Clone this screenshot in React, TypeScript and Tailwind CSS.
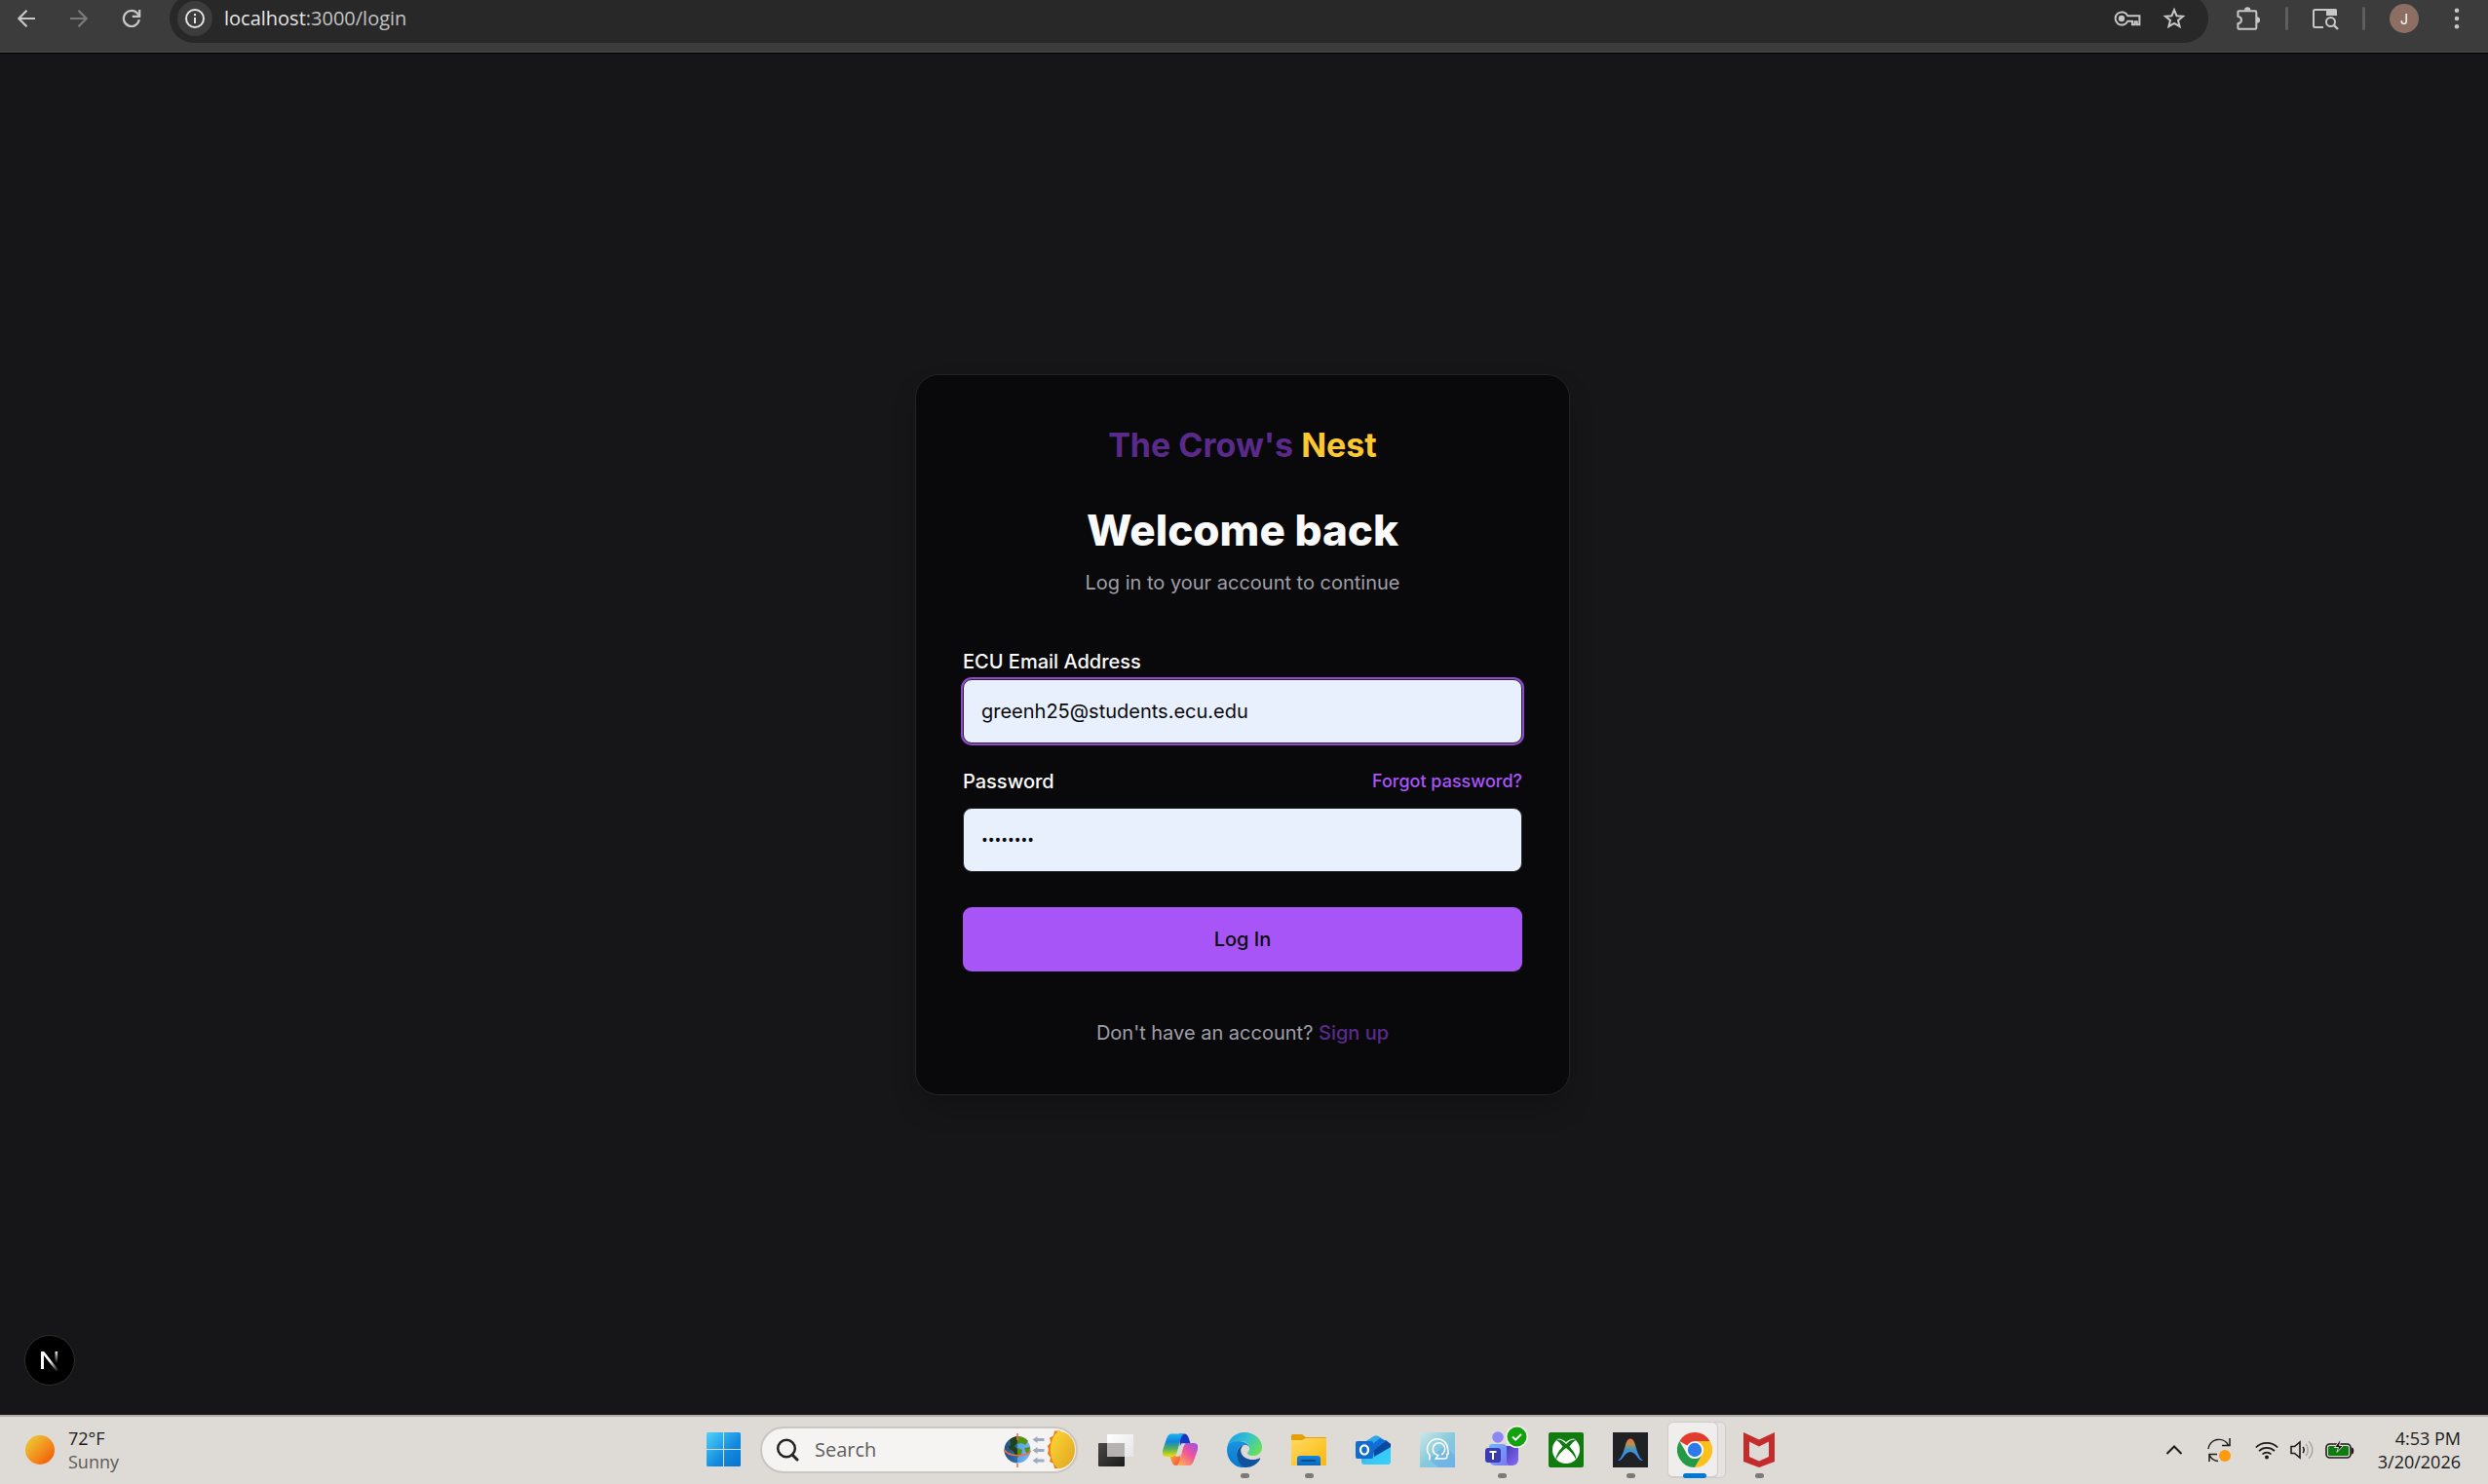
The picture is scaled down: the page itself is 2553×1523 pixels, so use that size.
import type { ReactNode } from 'react';

const iconButton = 'flex h-9 w-9 shrink-0 items-center justify-center text-[#c7c7c7]';

function BrowserBar() {
  return (
    <header className="h-[55px] shrink-0 overflow-hidden border-b border-black bg-[#3c3c3c] font-['Open_Sans',sans-serif]">
      <div className="-mt-1.5 flex h-[50px] items-center">
        <nav className="flex w-[174px] shrink-0 gap-[18px] pl-[9px]" aria-label="History">
          <button className={iconButton} aria-label="Back">
            <svg width="18" height="18" viewBox="0 0 18 18" fill="none" stroke="currentColor" strokeWidth="2.2">
              <path d="M18 9H1.5M9.5 .8 1.4 9l8.1 8.2" />
            </svg>
          </button>
          <button className="flex h-9 w-9 shrink-0 items-center justify-center text-[#7b7b7b]" aria-label="Forward">
            <svg width="18" height="18" viewBox="0 0 18 18" fill="none" stroke="currentColor" strokeWidth="2.2">
              <path d="M0 9h16.5M8.5 .8 16.6 9l-8.1 8.2" />
            </svg>
          </button>
          <button className={iconButton} aria-label="Reload">
            <svg width="20" height="20" viewBox="0 0 20 20" fill="none" stroke="currentColor" strokeWidth="2.2">
              <path d="M17.8 11.2A8 8 0 1 1 16 4.8L18 7" />
              <path d="M18.2 1v6.8h-7.4" />
            </svg>
          </button>
        </nav>
        <div className="flex h-[50px] min-w-0 flex-1 items-center rounded-full bg-[#282828] pl-2 pr-[17px]">
          <button className="flex h-9 w-9 shrink-0 items-center justify-center rounded-full bg-[#3c3c3c] text-[#e3e3e3]" aria-label="Site information">
            <svg width="20" height="20" viewBox="0 0 20 20" fill="none" stroke="currentColor" strokeWidth="2">
              <circle cx="10" cy="10" r="9" />
              <path d="M10 9v6M10 5v2.2" />
            </svg>
          </button>
          <div className="ml-3 flex-1 text-[20px] leading-[30px] text-[#c3c3c3]">
            <span className="text-[#e6e6e6]">localhost</span>:3000/login
          </div>
          <div className="flex gap-3">
            <button className={iconButton} aria-label="Passwords">
              <svg width="28" height="18" viewBox="0 0 28 18" fill="none" stroke="currentColor" strokeWidth="2">
                <path d="M14.2 6.2A6.6 6.6 0 1 0 14.2 11.8H19v3.4h2.6v-3h2.2v3h2.6V6.2z" />
                <circle cx="8" cy="9" r="3.2" fill="currentColor" stroke="none" />
              </svg>
            </button>
            <button className={iconButton} aria-label="Bookmark this tab">
              <svg width="24" height="24" viewBox="0 0 24 24" fill="none" stroke="currentColor" strokeWidth="2">
                <path d="m12 3.2 2.5 6 6.5.5-5 4.2 1.6 6.3L12 16.8l-5.600 3.400L8 13.900 3 9.700l6.500-.5z" />
              </svg>
            </button>
          </div>
        </div>
        <div className="flex shrink-0 items-center pl-[23px] pr-3.5">
          <button className={iconButton} aria-label="Extensions">
            <svg width="26" height="26" viewBox="0 0 26 26" fill="none" stroke="currentColor" strokeWidth="2">
              <path d="M4.500 5.200h15.500a1.300 1.300 0 0 1 1.300 1.300v16a1.300 1.300 0 0 1-1.300 1.300H3.700a1.300 1.300 0 0 1-1.300-1.300v-4.200c4.800-1 4.800-6.600 0-7.600V6.500a1.300 1.300 0 0 1 1.300-1.300z" />
              <path d="M9 4.500a3.200 3.200 0 0 1 6.400 0zM21.800 11.200a3.200 3.200 0 0 1 0 6.400z" fill="currentColor" stroke="none" />
            </svg>
          </button>
          <span className="mx-5 h-6 w-[3px] rounded-full bg-[#5e5e5e]" />
          <button className={iconButton} aria-label="Search tabs">
            <svg width="28" height="24" viewBox="0 0 28 24" fill="none" stroke="currentColor" strokeWidth="2">
              <path d="M12 21H3.500A1.500 1.500 0 0 1 2 19.500V4.500A1.500 1.500 0 0 1 3.500 3H24.500" />
              <path d="M15 2h9.500A1.500 1.500 0 0 1 26 3.500V9H15z" fill="currentColor" stroke="none" />
              <circle cx="19.500" cy="15.500" r="4.500" />
              <path d="m22.800 18.800 4.200 4.200" strokeWidth="2.400" />
            </svg>
          </button>
          <span className="ml-5 h-6 w-[3px] rounded-full bg-[#5e5e5e]" />
          <button className="ml-[25px] flex h-[30px] w-[30px] items-center justify-center rounded-full bg-[#8d6e63] font-[Inter] text-[14px] text-white">J</button>
          <button className="ml-[21px] flex h-9 w-9 items-center justify-center text-[#c7c7c7]" aria-label="Menu">
            <svg width="6" height="22" viewBox="0 0 6 22" fill="currentColor">
              <circle cx="3" cy="2.800" r="2.300" />
              <circle cx="3" cy="11" r="2.300" />
              <circle cx="3" cy="19.200" r="2.300" />
            </svg>
          </button>
        </div>
      </div>
      <div className="mt-[9px] h-px bg-[#4a4a4a]" />
    </header>
  );
}

const field =
  'block h-[66px] w-full rounded-[9px] border border-[#27272a] bg-[#e8f0fe] px-[18px] text-[#09090b] outline-none';

function LoginCard() {
  return (
    <section className="w-full max-w-[672px] rounded-3xl border border-[#242427] bg-[#09090b] p-12 font-[Inter,sans-serif] text-[20px] leading-[30px] text-[#fafafa] shadow-[0_15px_30px_-6px_rgba(0,0,0,0.25)]">
      <p className="text-center text-[34px] leading-[48px] font-bold text-[#592a8a]">
        The Crow's <span className="text-[#fdc82f]">Nest</span>
      </p>
      <h1 className="mt-9 text-center text-[44px] leading-[54px] font-extrabold">Welcome back</h1>
      <p className="mt-3 text-center text-[#9f9fa9]">Log in to your account to continue</p>
      <form className="mt-14" onSubmit={(e) => e.preventDefault()}>
        <label htmlFor="email" className="mb-[7px] block leading-[21px] font-medium">
          ECU Email Address
        </label>
        <input id="email" type="email" defaultValue="greenh25@students.ecu.edu" className={`${field} ring-2 ring-[#8e48d2]`} />
        <div className="mt-6 mb-3 flex items-center justify-between">
          <label htmlFor="password" className="font-medium">
            Password
          </label>
          <a href="#forgot" className="text-[18px] font-medium text-[#a855f7]">
            Forgot password?
          </a>
        </div>
        <input id="password" type="password" defaultValue="crowsnst" className={`${field} font-['Open_Sans'] text-[18px]`} />
        <button className="mt-9 h-[66px] w-full rounded-[9px] bg-[#a855f7] font-medium text-[#09090b]">Log In</button>
      </form>
      <p className="mt-12 text-center text-[#9f9fa9]">
        Don't have an account?{' '}
        <a href="#signup" className="font-medium text-[#592a8a]">
          Sign up
        </a>
      </p>
    </section>
  );
}

function NextBadge() {
  return (
    <button className="absolute bottom-[30px] left-[25px] flex h-[52px] w-[52px] items-center justify-center rounded-full border border-[#2e2e2e] bg-black" aria-label="Open dev tools">
      <svg width="20" height="24" viewBox="0 0 20 24" fill="none">
        <defs>
          <linearGradient id="nDiag" x1="11" y1="12" x2="19" y2="23" gradientUnits="userSpaceOnUse">
            <stop stopColor="#fff" />
            <stop offset="1" stopColor="#fff" stopOpacity="0" />
          </linearGradient>
          <linearGradient id="nStem" x1="0" y1="2" x2="0" y2="15" gradientUnits="userSpaceOnUse">
            <stop stopColor="#fff" />
            <stop offset="1" stopColor="#fff" stopOpacity="0" />
          </linearGradient>
        </defs>
        <path d="M1 3h3v18H1z" fill="#fff" />
        <path d="M1 3h3.200L19 22l-2.200 1.600z" fill="url(#nDiag)" />
        <path d="M15.500 3h2.600v13h-2.600z" fill="url(#nStem)" />
      </svg>
    </button>
  );
}

function TaskSlot({ label, children, running, active }: { label: string; children: ReactNode; running?: boolean; active?: boolean }) {
  return (
    <button aria-label={label} className="relative flex h-[66px] w-[66px] items-center justify-center">
      {active && (
        <>
          <span className="absolute top-1 left-3 h-[58px] w-[53px] rounded-[6px] border border-[#d0ccc8] bg-[#e6e3e0]" />
          <span className="absolute top-1 left-[5px] h-[58px] w-[52px] rounded-[6px] border border-b-2 border-[#d0ccc8] bg-[#f0eeec]" />
        </>
      )}
      <span className="relative">{children}</span>
      {running && <span className="absolute bottom-1 h-[5px] w-[9px] rounded-full bg-[#7c7976]" />}
      {active && <span className="absolute bottom-1 h-[5px] w-6 rounded-full bg-[#0078d4]" />}
    </button>
  );
}

function TaskIcons() {
  return (
    <>
      <TaskSlot label="Task view">
        <svg width="36" height="36" viewBox="0 0 36 36">
          <defs>
            <linearGradient id="tvDark" x1="0" y1="0" x2="1" y2="1">
              <stop stopColor="#4a4846" />
              <stop offset="1" stopColor="#1a1a1a" />
            </linearGradient>
            <linearGradient id="tvLight" x1="0" y1="0" x2="1" y2="1">
              <stop stopColor="#ffffff" />
              <stop offset="1" stopColor="#e4e4e4" />
            </linearGradient>
          </defs>
          <rect x="0" y="11" width="27" height="24" rx="1" fill="url(#tvDark)" />
          <rect x="9" y="2" width="27" height="23" rx="1" fill="url(#tvLight)" />
          <rect x="9" y="11" width="18" height="14" fill="#b4b3b2" />
        </svg>
      </TaskSlot>
      <TaskSlot label="Copilot">
        <svg width="36" height="36" viewBox="0 0 36 36">
          <defs>
            <linearGradient id="cpA" x1="0" y1="0" x2="0" y2="1">
              <stop stopColor="#18b5f0" />
              <stop offset=".35" stopColor="#1583d8" />
              <stop offset=".65" stopColor="#54b257" />
              <stop offset="1" stopColor="#f5dc10" />
            </linearGradient>
            <linearGradient id="cpB" x1="1" y1="0" x2=".2" y2="1">
              <stop stopColor="#9a4df0" />
              <stop offset=".5" stopColor="#f0569a" />
              <stop offset="1" stopColor="#ffae52" />
            </linearGradient>
            <linearGradient id="cpC" x1="0" y1="0" x2="1" y2="1">
              <stop stopColor="#ffb41e" />
              <stop offset="1" stopColor="#ee4a52" />
            </linearGradient>
          </defs>
          <path d="M17 1.500h5c3 0 4 2 5 5l1.500 5H23c-3 0-4 1-5 4z" fill="#1636c4" />
          <path d="M19 34h-5c-3 0-4-2-5-5l-1.500-5H13c3 0 4-1 5-4z" fill="url(#cpC)" />
          <path d="M9 1.500h13c-2 1-3 3-4 7l-3 11c-1 4-3 5.500-6 5.500H4c-4 0-5-3-3.500-8L4 6.500c1-3 2.500-5 5-5z" fill="url(#cpA)" />
          <path d="M27 34H14c2-1 3-3 4-7l3-11c1-4 3-5 6-5h5c4 0 5 3 3.500 8L32 29c-1 3-2.500 5-5 5z" fill="url(#cpB)" />
          <path d="m19 11.500 4-.5c-1.500 1-2.500 3-3 5l-2.500 8.500-4.500.5c1.500-1 2.300-2.500 3-5z" fill="#dedad6" />
        </svg>
      </TaskSlot>
      <TaskSlot label="Edge" running>
        <svg width="36" height="36" viewBox="0 0 36 36">
          <defs>
            <linearGradient id="edTop" x1="0" y1=".2" x2="1" y2=".7">
              <stop stopColor="#1b9de2" />
              <stop offset=".5" stopColor="#33c3cf" />
              <stop offset="1" stopColor="#6ce052" />
            </linearGradient>
            <linearGradient id="edLeft" x1="0" y1="0" x2="0" y2="1">
              <stop stopColor="#1a93df" />
              <stop offset="1" stopColor="#0878cf" />
            </linearGradient>
          </defs>
          <path d="M0 17C1 7 8 0 18 0s18 7 18 15c0 6-4 9-9 9-4 0-6-1-6-3 0-1 2-2 2-5 0-4-4-7-9-7C8 9 2 12 0 17z" fill="url(#edTop)" />
          <path d="M0 18c0-6 6-9 12-9 6 0 11 3 11 7-1-2-3-3-5-3-5 0-8 5-8 10 0 6 4 11 11 13-12 2-21-7-21-18z" fill="url(#edLeft)" />
          <path d="M14 19c0-3 2-6 5-6 2 0 4 1 4 4 0 2-2 3-2 4 0 3 4 4 8 4l5 1c-9 3-20 0-20-7z" fill="#dedad6" />
          <path d="M10 23c0-5 3-9 7-10-3 3-3.500 6-2 9 2.500 5 10 8 18.500 4.500.8-.3 1 .3.700.8C31 33 25.500 36 19 36c-5-1-9-7-9-13z" fill="#11529c" />
        </svg>
      </TaskSlot>
      <TaskSlot label="File Explorer" running>
        <svg width="36" height="36" viewBox="0 0 36 36">
          <defs>
            <linearGradient id="fdY" x1="0" y1="0" x2="1" y2="1">
              <stop stopColor="#ffda62" />
              <stop offset="1" stopColor="#fbb80b" />
            </linearGradient>
            <linearGradient id="fdB" x1="0" y1="0" x2="0" y2="1">
              <stop stopColor="#1587dc" />
              <stop offset="1" stopColor="#0a67bc" />
            </linearGradient>
          </defs>
          <path d="M0 3.500A1.500 1.500 0 0 1 1.500 2H11l4 3h20a1 1 0 0 1 1 1v8H0z" fill="#e3a008" />
          <path d="M0 8h11l3.500-2H36v28H0z" fill="url(#fdY)" />
          <path d="M6 34v-7a3 3 0 0 1 3-3h18a3 3 0 0 1 3 3v7z" fill="url(#fdB)" />
          <path d="M11 29h13" stroke="#0a4d92" strokeWidth="2" strokeLinecap="round" />
        </svg>
      </TaskSlot>
      <TaskSlot label="Outlook">
        <svg width="36" height="36" viewBox="0 0 36 36">
          <defs>
            <linearGradient id="olE" x1="0" y1="0" x2="1" y2="1">
              <stop stopColor="#1478d4" />
              <stop offset=".5" stopColor="#37c6f4" />
              <stop offset="1" stopColor="#36d3fa" />
            </linearGradient>
          </defs>
          <path d="M6 12 18.500 4c1.500-1 3.500-1 5 0L36 12v17a4 4 0 0 1-4 4H10a4 4 0 0 1-4-4z" fill="#2ea8e8" />
          <path d="M6 27 36 11v18a4 4 0 0 1-4 4H10a4 4 0 0 1-4-4z" fill="url(#olE)" />
          <path d="m18 17 13-9 5 4v3L19 25z" fill="#0b49a0" />
          <path d="m15 14 10-8 6 3-13 10z" fill="#0f6fd6" />
          <rect x="0" y="9" width="18" height="18" rx="2" fill="#0f6cd0" />
          <ellipse cx="9" cy="18" rx="4" ry="4.600" fill="none" stroke="#fff" strokeWidth="2.400" />
        </svg>
      </TaskSlot>
      <TaskSlot label="Assistant">
        <svg width="36" height="36" viewBox="0 0 36 36">
          <defs>
            <linearGradient id="asB" x1="0" y1="0" x2="1" y2="1">
              <stop stopColor="#cfe6e6" />
              <stop offset=".5" stopColor="#86cbdc" />
              <stop offset="1" stopColor="#7cbcf4" />
            </linearGradient>
          </defs>
          <path d="M0 0h36v36H0z" fill="url(#asB)" />
          <path d="M9 28 20 36h16V24L26 14z" fill="#62a9e0" opacity=".5" />
          <g fill="none" stroke="#fff" strokeWidth="1.600">
            <path d="M10 28.500v-5c-2-2-2.500-4-2.500-6a10.500 10.500 0 0 1 21-.5l.8 4.500-1.500 1v2.500c0 1.500-1 2-2.500 2h-9l2.500-3.500c-4-1-5.500-4-5.500-6.500a6.200 6.200 0 1 1 12.400 0c0 2.500-1.500 4.500-3.500 6" />
          </g>
        </svg>
      </TaskSlot>
      <TaskSlot label="Teams" running>
        <svg width="48" height="44" viewBox="0 0 48 44" className="-mt-2 ml-2.5">
          <defs>
            <linearGradient id="tmA" x1="0" y1="0" x2="1" y2="1">
              <stop stopColor="#72b6ff" />
              <stop offset="1" stopColor="#7c74f0" />
            </linearGradient>
            <linearGradient id="tmB" x1="0" y1="0" x2="1" y2="1">
              <stop stopColor="#4139b0" />
              <stop offset="1" stopColor="#8a6cf5" />
            </linearGradient>
          </defs>
          <circle cx="15" cy="13" r="5.800" fill="#8f86f5" />
          <path d="M21 22h15v14a6 6 0 0 1-6 6h-9z" fill="url(#tmB)" />
          <path d="M6 23a3 3 0 0 1 3-3h11a4 4 0 0 1 4 4v12c0 3 1 5 3 6H12a6 6 0 0 1-6-6z" fill="url(#tmA)" />
          <rect x="2" y="24" width="16" height="15" rx="3" fill="#3a3bb0" />
          <path d="M6.500 28h7M10 28v8" stroke="#fff" strokeWidth="2" />
          <circle cx="34.500" cy="12.500" r="11.500" fill="#f5f4f2" />
          <circle cx="34.500" cy="12.500" r="10" fill="#13a10e" />
          <path d="m30 12.500 3.200 3.200 5.800-5.800" fill="none" stroke="#fff" strokeWidth="2" />
        </svg>
      </TaskSlot>
      <TaskSlot label="Xbox">
        <svg width="36" height="36" viewBox="0 0 36 36">
          <rect width="36" height="36" rx="2" fill="#107c10" />
          <circle cx="18" cy="18" r="14" fill="#fff" />
          <path d="M9 6.500c3-.5 6 1 9 3.500 3-2.500 6-4 9-3.500l-1-1.500c-5-2-11-2-16 0z" fill="#107c10" />
          <path d="M8 8c3-1.500 7 1 10 4 3-3 7-5.500 10-4-2 1-4 3-6.500 6.500 4 4.500 7.500 10 7 14-2-5-6-9-10.500-12.500C13.500 19.500 9.500 23.500 7.500 28.500c-.5-4 3-9.500 7-14C12 11 10 9 8 8z" fill="#107c10" />
        </svg>
      </TaskSlot>
      <TaskSlot label="Antigravity" running>
        <svg width="36" height="36" viewBox="0 0 36 36">
          <defs>
            <linearGradient id="agA" x1="0" y1="0" x2="0" y2="1">
              <stop stopColor="#f2693c" />
              <stop offset=".25" stopColor="#b5944e" />
              <stop offset=".5" stopColor="#3f95c8" />
              <stop offset="1" stopColor="#3186ff" />
            </linearGradient>
          </defs>
          <path d="M0 0h36v36H0z" fill="#202124" />
          <path d="M5 29c5-4 6-10 8-16 1-4 2.500-6.500 5-6.500s4 2.500 5 6.500c2 6 3 12 8 16-5 1-7-9-13-9S10 30 5 29z" fill="url(#agA)" />
        </svg>
      </TaskSlot>
      <TaskSlot label="Chrome" active>
        <svg width="36" height="36" viewBox="0 0 36 36">
          <path d="M18 18 2.400 9A18 18 0 0 1 33.600 9z" fill="#e33b2e" />
          <path d="M18 9h15.600A18 18 0 0 1 18 36l7.800-13.500z" fill="#fcc21b" />
          <path d="M2.400 9 10.200 22.500A9 9 0 0 0 25.800 22.500L18 36A18 18 0 0 1 2.400 9z" fill="#249a48" />
          <circle cx="18" cy="18" r="9" fill="#fff" />
          <circle cx="18" cy="18" r="7.200" fill="#2c7be8" />
        </svg>
      </TaskSlot>
      <TaskSlot label="McAfee" running>
        <svg width="36" height="36" viewBox="0 0 36 36">
          <path d="m2 0 16 7.500L34 0v30l-16 6-16-6zM8 9.500V25l10 4.500L28 25V9.500L18 14.500z" fill="#c42b2b" fillRule="evenodd" />
        </svg>
      </TaskSlot>
    </>
  );
}

function SearchArt() {
  return (
    <svg width="74" height="40" viewBox="0 0 74 40" className="shrink-0">
      <defs>
        <linearGradient id="glS" x1="0" y1="0" x2="1" y2="0">
          <stop stopColor="#24507c" />
          <stop offset=".5" stopColor="#2f6fae" />
          <stop offset=".52" stopColor="#5aa2ea" />
          <stop offset="1" stopColor="#74b6f5" />
        </linearGradient>
        <linearGradient id="snS" x1="0" y1="0" x2="1" y2="1">
          <stop stopColor="#fdd835" />
          <stop offset="1" stopColor="#e0a320" />
        </linearGradient>
      </defs>
      <circle cx="14" cy="20" r="13.500" fill="url(#glS)" />
      <path d="M6 10c3-3 5-4 8-4v7l-3 3 3 3v8c-4-2-3-5-5-6-3-1-4-3-4-5 2 0 3-2 1-6z" fill="#22401c" />
      <path d="M14 6c5 0 9 2 11 5l-3 4-4-2-4 1zM14 18l5 2-1 5-4 3zM21 18l6-1-1 7-3-1z" fill="#549212" />
      <path d="M.5 20c5 7 22 8 27 1" fill="none" stroke="#f2694c" strokeWidth="1.600" />
      <path d="M14 3v7M14 34v4" stroke="#f2694c" strokeWidth="1.600" />
      <g fill="#9cabc2">
        <path d="m29.500 9.500 5-3.500v2h7v3h-7v2zM29.500 20.500l5-3.500v2h7v3h-7v2zM29.500 31l5-3.500v2h7v3h-7v2z" />
      </g>
      <path d="M58 .5h-6l-1 5-4 2 1 5-3 3.500 1 4-1 4 3 4-1 4 4 2 1 5h6z" fill="#f07818" />
      <path d="M56 .5C69 2 73 12 73 20s-5 18-17 19.500C45 30 45 10 56 .5z" fill="url(#snS)" />
    </svg>
  );
}

function Taskbar() {
  return (
    <footer className="grid h-[71px] shrink-0 grid-cols-[1fr_auto_1fr] border-t-2 border-[#b1aeac] bg-[#dedad6] pb-0.5 font-['Open_Sans',sans-serif] text-[18px] leading-6 text-[#1b1b1b]">
      <button className="flex items-center gap-3.5 pl-[26px] text-left">
        <span className="h-[30px] w-[30px] rounded-full bg-linear-to-br from-[#ecc132] from-15% to-[#f26a0c] to-80%" />
        <span>
          <span className="block">72°F</span>
          <span className="block text-[#5c5a58]">Sunny</span>
        </span>
      </button>
      <div className="flex items-center pr-0.5 pl-3">
        <button aria-label="Start" className="mr-5">
          <svg width="35" height="35" viewBox="0 0 35 35">
            <defs>
              <linearGradient id="winG" x1="0" y1="0" x2="35" y2="35" gradientUnits="userSpaceOnUse">
                <stop stopColor="#4cd2fc" />
                <stop offset=".6" stopColor="#1389de" />
                <stop offset="1" stopColor="#0873cf" />
              </linearGradient>
            </defs>
            <path d="M1.500 0H17v17H0V1.500A1.500 1.500 0 0 1 1.500 0zM18 0h15.500A1.500 1.500 0 0 1 35 1.500V17H18zM0 18h17v17H1.500A1.500 1.500 0 0 1 0 33.500zM18 18h17v15.500a1.500 1.500 0 0 1-1.500 1.500H18z" fill="url(#winG)" />
          </svg>
        </button>
        <label className="mr-1.5 flex h-12 w-[326px] items-center rounded-full border-2 border-[#cbc5c1] bg-[#f6f4f3] pl-3.5">
          <svg width="24" height="24" viewBox="0 0 24 24" fill="none" stroke="#222" className="shrink-0">
            <circle cx="11" cy="10.500" r="8.800" strokeWidth="2.500" />
            <path d="m17 17 5 5" strokeWidth="3" strokeLinecap="round" />
          </svg>
          <input aria-label="Search" placeholder="Search" className="ml-4 w-0 min-w-0 flex-1 text-[20px] placeholder:text-[#5e5c5b]" />
          <SearchArt />
        </label>
        <TaskIcons />
      </div>
      <div className="flex items-center justify-end pr-7">
        <button aria-label="Hidden icons" className="mr-6">
          <svg width="18" height="12" viewBox="0 0 18 12" fill="none" stroke="#1b1b1b" strokeWidth="2">
            <path d="m1.500 10 7.500-7.500 7.500 7.500" />
          </svg>
        </button>
        <button aria-label="Windows Update" className="mr-6">
          <svg width="26" height="26" viewBox="0 0 26 26" fill="none" stroke="#1b1b1b" strokeWidth="1.500">
            <path d="M2 12a11 11 0 0 1 20.500-4M24 1v7.500h-8M12 24.500A11 11 0 0 1 3 18M3 25v-7.500h8" />
            <circle cx="19" cy="19" r="6" fill="#ff9a0b" stroke="none" />
          </svg>
        </button>
        <button aria-label="Network, volume and battery" className="mr-6 flex items-center gap-3">
          <svg width="24" height="20" viewBox="0 0 24 20" fill="none" stroke="#1b1b1b" strokeWidth="1.700">
            <path d="M.8 7.500a16 16 0 0 1 22.400 0M4 11.200a11.500 11.500 0 0 1 16 0M7.500 14.500a6.500 6.500 0 0 1 9 0" />
            <circle cx="12" cy="17.500" r="2" fill="#1b1b1b" stroke="none" />
          </svg>
          <svg width="24" height="20" viewBox="0 0 24 20" fill="none" stroke="#1b1b1b" strokeWidth="1.600">
            <path d="M1 6.500h3.500L10 2v16l-5.500-4.500H1zM13 7c1.500 1.500 1.500 4.500 0 6" />
            <path d="M16 4c3 3 3 9 0 12M19 1.200c5 5 5 12.600 0 17.600" stroke="#aaa7a4" />
          </svg>
          <svg width="30" height="20" viewBox="0 0 30 20" fill="none">
            <rect x="1" y="4" width="25" height="14" rx="3.500" stroke="#1b1b1b" strokeWidth="1.600" />
            <rect x="3" y="6" width="21" height="10" rx="1.500" fill="#107c10" />
            <path d="M27 7.500c3 0 3 7 0 7z" fill="#1b1b1b" />
            <path d="M15 0 9.500 7.500h4L12 12.500 18.500 5.500h-4L16 0z" fill="#1b1b1b" stroke="#dedad6" strokeWidth="1" />
          </svg>
        </button>
        <button className="text-right">
          <span className="block">4:53 PM</span>
          <span className="block">3/20/2026</span>
        </button>
      </div>
    </footer>
  );
}

export default function App() {
  return (
    <div className="flex h-screen flex-col overflow-hidden bg-[#161618]">
      <BrowserBar />
      <main className="relative flex flex-1 items-center justify-center pr-[3px]">
        <LoginCard />
        <NextBadge />
      </main>
      <Taskbar />
    </div>
  );
}
